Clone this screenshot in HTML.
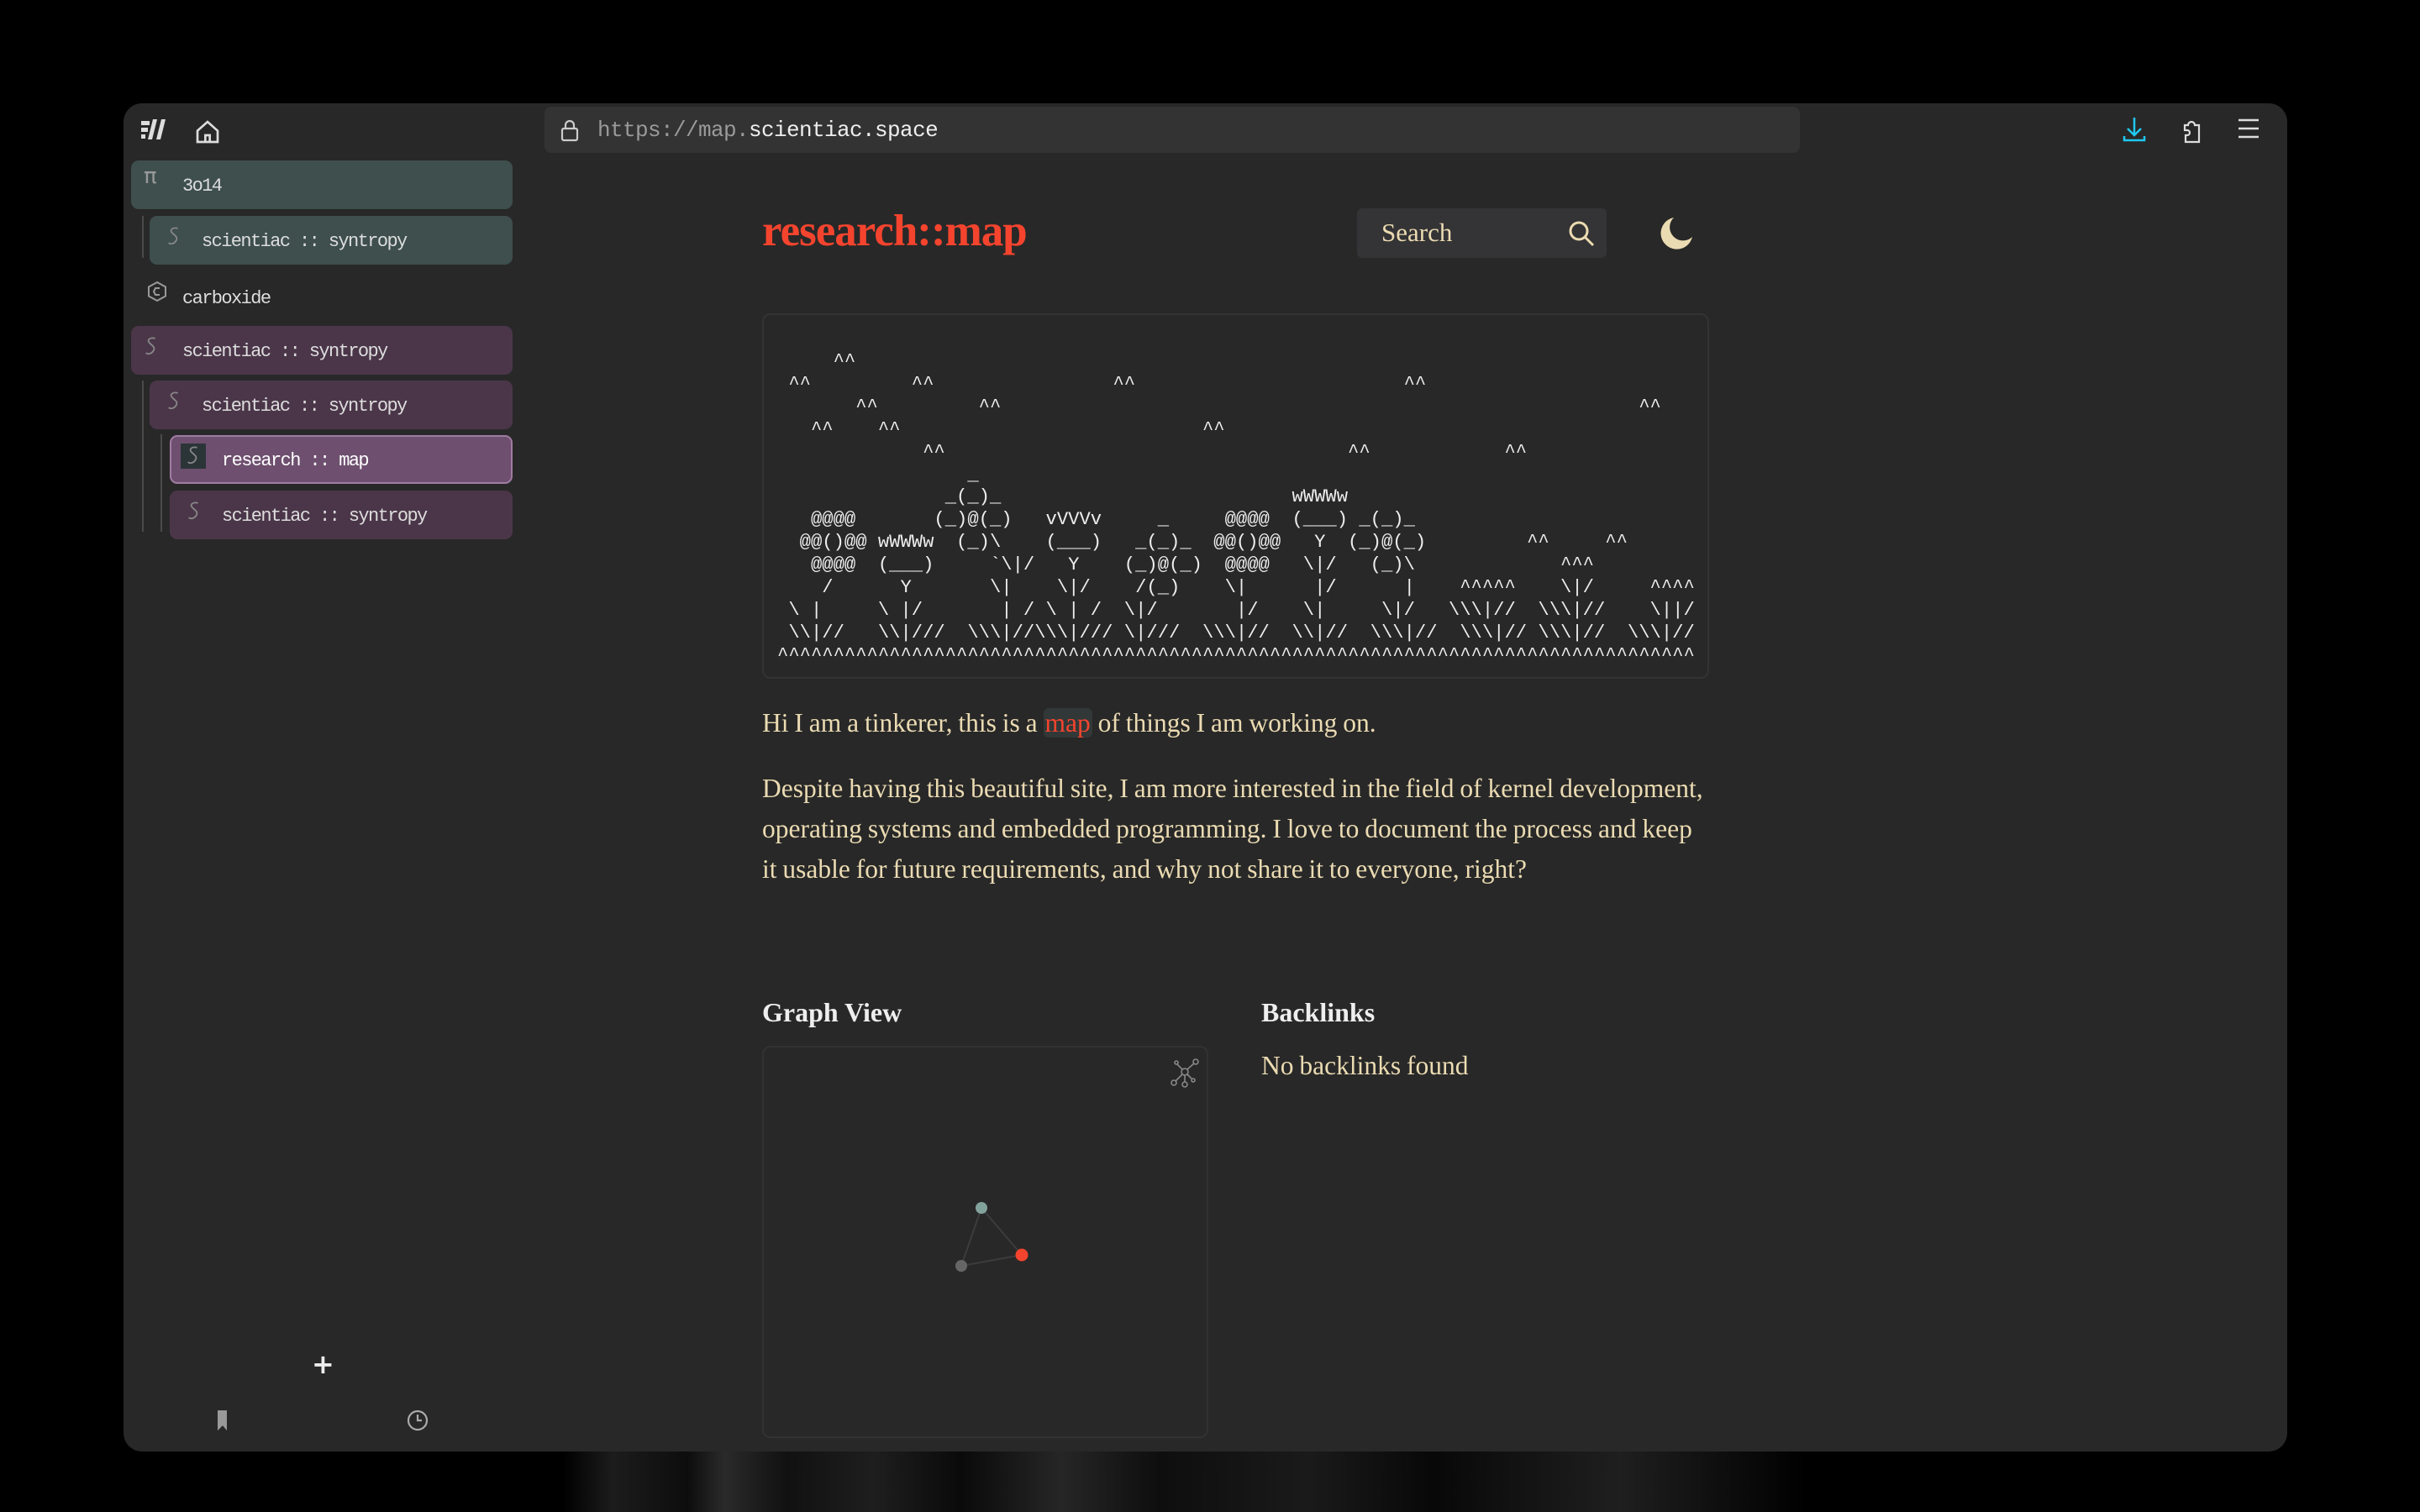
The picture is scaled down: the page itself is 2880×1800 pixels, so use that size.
<!DOCTYPE html>
<html><head><meta charset="utf-8"><style>
*{margin:0;padding:0;box-sizing:border-box}
html,body{width:2880px;height:1800px;background:#000;overflow:hidden;position:relative;font-family:"Liberation Serif",serif}
.bgsw{position:absolute;left:670px;top:1720px;width:1480px;height:80px;background:linear-gradient(90deg,transparent 0,#1c1c1c 4%,#0d0d0d 10%,#2a2a2a 13%,#111 18%,#1e1e1e 25%,#0a0a0a 32%,#262626 40%,#0e0e0e 48%,#1a1a1a 60%,#080808 70%,#1f1f1f 85%,transparent 100%)}
.win{position:absolute;left:147px;top:123px;width:2575px;height:1605px;background:#282828;border-radius:22px;overflow:hidden}
.url{position:absolute;left:501px;top:4px;width:1494px;height:55px;background:#333;border-radius:8px}
.url span{position:absolute;left:63px;top:13px;font:26px "Liberation Mono",monospace;color:#eee;white-space:pre;letter-spacing:-0.6px}
.item{position:absolute;height:58px;border-radius:9px;font:22px "Liberation Mono",monospace;color:#ddd;white-space:pre;letter-spacing:-1.6px}
.item .t{position:absolute;top:18px}
.item svg{position:absolute;top:12px}
.tl{position:absolute;background:#4a4a4a;width:2px}
.c{position:absolute;left:760px}
h1{position:absolute;left:760px;top:122px;font:bold 53px "Liberation Serif",serif;color:#f4442e;letter-spacing:-1px}
.search{position:absolute;left:1468px;top:125px;width:297px;height:59px;background:#343335;border-radius:6px}
.search span{position:absolute;left:29px;top:11px;font:31px "Liberation Serif",serif;color:#ebdbb2}
pre{position:absolute;left:760px;top:250px;width:1127px;height:435px;border:2px solid #333;border-radius:10px;padding:43px 0 0 16px;font:22.2px/26.9px "Liberation Mono",monospace;color:#eee}
p{font-size:31.5px;color:#ebdbb2;line-height:48px;width:1126px;word-spacing:-1px}
.hl{background:#323838;color:#f4442e;border-radius:6px;padding:0 2px}
.h3{position:absolute;font:bold 32px "Liberation Serif",serif;color:#eee}
.graph{position:absolute;left:760px;top:1122px;width:531px;height:467px;border:2px solid #323232;border-radius:10px}
</style></head><body>
<svg width="0" height="0" style="position:absolute"><defs><symbol id="sq" viewBox="0 0 20 26"><path d="M15 3C10 1 4 4 7 8s9 6 6 11-8 5-10 3" fill="none" stroke="#888" stroke-width="2"/></symbol></defs></svg>
<div class="bgsw"></div>
<div class="win">
 <svg style="position:absolute;left:20px;top:18px" width="30" height="28" viewBox="0 0 30 28"><g fill="#ddd"><path d="M1 3h10v5H1zM1 11h8v5H1zM1 19h5v5H1z"/><path d="M15 1h5l-6 24h-5z"/><path d="M25 1h5l-6 24h-5z"/></g></svg>
 <svg style="position:absolute;left:84px;top:18px" width="32" height="32" viewBox="0 0 24 24" fill="none" stroke="#ddd" stroke-width="2"><path d="M3 11 12 3l9 8v10H3z"/><path d="M10 21v-6h4v6"/></svg>
 <div class="url">
  <svg style="position:absolute;left:18px;top:14px" width="24" height="28" viewBox="0 0 24 28" fill="none" stroke="#ccc" stroke-width="2.2"><rect x="3" y="12" width="18" height="14" rx="2"/><path d="M7 12V8a5 5 0 0 1 10 0v4"/></svg>
  <span><span style="position:static;color:#9a9a9a">https://map.</span>scientiac.space</span>
 </div>
 <svg style="position:absolute;left:2378px;top:14px" width="30" height="34" viewBox="0 0 30 34" fill="none" stroke="#1ec8f0" stroke-width="2.5"><path d="M15 3v20M7 16l8 8 8-8"/><path d="M3 25v5h24v-5"/></svg>
 <svg style="position:absolute;left:2448px;top:14px" width="28" height="34" viewBox="0 0 28 34" fill="none" stroke="#ddd" stroke-width="2.2"><path d="M5 12h4a4 4 0 1 1 8 0h5v20H6v-8h2a3 3 0 1 0 0-6H5z"/></svg>
 <svg style="position:absolute;left:2516px;top:16px" width="26" height="28" viewBox="0 0 26 28" stroke="#ddd" stroke-width="2.4"><path d="M1 4h24M1 14h24M1 24h24"/></svg>

 <div class="item" style="left:9px;top:68px;width:454px;background:#3e4f4d"><span style="position:absolute;left:15px;top:4px;color:#999;font:26px 'DejaVu Sans'">π</span><span class="t" style="left:61px">3o14</span></div>
 <div class="tl" style="left:22px;top:134px;height:50px"></div>
 <div class="item" style="left:31px;top:134px;width:432px;background:#3e4f4d"><svg style="left:20px" width="18" height="24"><use href="#sq"/></svg><span class="t" style="left:62px">scientiac :: syntropy</span></div>
 <svg style="position:absolute;left:28px;top:211px" width="24" height="26" viewBox="0 0 24 26" fill="none" stroke="#999" stroke-width="2"><path d="M12 2 22 7.5v11L12 24 2 18.5v-11z"/><path d="M15 9h-5l-2 4 2 4h5"/></svg>
 <div class="item" style="left:70px;top:202px;background:none"><span class="t" style="left:0">carboxide</span></div>
 <div class="item" style="left:9px;top:265px;width:454px;background:#4b3649"><svg style="left:15px" width="18" height="24"><use href="#sq"/></svg><span class="t" style="left:61px">scientiac :: syntropy</span></div>
 <div class="tl" style="left:22px;top:330px;height:180px"></div>
 <div class="item" style="left:31px;top:330px;width:432px;background:#4b3649"><svg style="left:20px" width="18" height="24"><use href="#sq"/></svg><span class="t" style="left:62px">scientiac :: syntropy</span></div>
 <div class="tl" style="left:44px;top:394px;height:116px"></div>
 <div class="item" style="left:55px;top:395px;width:408px;background:#6e4f6f;border:2px solid #a07ca2"><span style="position:absolute;left:11px;top:8px;width:30px;height:30px;background:#2b3538"></span><svg style="left:17px;top:10px" width="18" height="24"><use href="#sq"/></svg><span class="t" style="left:60px;top:16px;color:#fff">research :: map</span></div>
 <div class="item" style="left:55px;top:461px;width:408px;background:#4b3649"><svg style="left:20px" width="18" height="24"><use href="#sq"/></svg><span class="t" style="left:62px">scientiac :: syntropy</span></div>
 <div style="position:absolute;left:224px;top:1482px;font:bold 32px 'DejaVu Sans';color:#eee">+</div>
 <svg style="position:absolute;left:110px;top:1555px" width="16" height="26" viewBox="0 0 16 26"><path d="M2 1h11v24l-5-6-6 6z" fill="#999"/></svg>
 <svg style="position:absolute;left:336px;top:1554px" width="28" height="28" viewBox="0 0 28 28" fill="none" stroke="#aaa" stroke-width="2.2"><circle cx="14" cy="14" r="11"/><path d="M14 7v7h5"/></svg>

 <h1>research::map</h1>
 <div class="search"><span>Search</span>
  <svg style="position:absolute;left:250px;top:13px" width="34" height="34" viewBox="0 0 34 34" fill="none" stroke="#ebdbb2" stroke-width="3"><circle cx="14" cy="14" r="10"/><path d="M21 21l10 10"/></svg></div>
 <svg style="position:absolute;left:1827px;top:133px" width="42" height="42" viewBox="0 0 42 42"><path d="M18 3A19 19 0 1 0 40 26 15 15 0 0 1 18 3z" fill="#ebdbb2"/></svg>

<pre>     ^^
 ^^         ^^                ^^                        ^^
       ^^         ^^                                                         ^^
   ^^    ^^                           ^^
             ^^                                    ^^            ^^
                 _
               _(_)_                          wWWWw
   @@@@       (_)@(_)   vVVVv     _     @@@@  (___) _(_)_
  @@()@@ wWWWw  (_)\    (___)   _(_)_  @@()@@   Y  (_)@(_)         ^^     ^^
   @@@@  (___)     `\|/   Y    (_)@(_)  @@@@   \|/   (_)\             ^^^
    /      Y       \|    \|/    /(_)    \|      |/      |    ^^^^^    \|/     ^^^^
 \ |     \ |/       | / \ | /  \|/       |/    \|     \|/   \\\|//  \\\|//    \||/
 \\|//   \\|///  \\\|//\\\|/// \|///  \\\|//  \\|//  \\\|//  \\\|// \\\|//  \\\|//
^^^^^^^^^^^^^^^^^^^^^^^^^^^^^^^^^^^^^^^^^^^^^^^^^^^^^^^^^^^^^^^^^^^^^^^^^^^^^^^^^^</pre>

 <p class="c" style="top:714px">Hi I am a tinkerer, this is a <span class="hl">map</span> of things I am working on.</p>
 <p class="c" style="top:792px">Despite having this beautiful site, I am more interested in the field of kernel development, operating systems and embedded programming. I love to document the process and keep it usable for future requirements, and why not share it to everyone, right?</p>

 <div class="h3" style="left:760px;top:1064px">Graph View</div>
 <div class="h3" style="left:1354px;top:1064px">Backlinks</div>
 <p class="c" style="left:1354px;top:1122px;width:600px">No backlinks found</p>
 <div class="graph">
  <svg style="position:absolute;left:483px;top:12px" width="36" height="38" viewBox="0 0 36 38" fill="none" stroke="#888" stroke-width="1.6"><circle cx="18" cy="17" r="4"/><circle cx="31" cy="5" r="3"/><circle cx="5" cy="30" r="3"/><circle cx="18" cy="32" r="3"/><circle cx="8" cy="6" r="2"/><circle cx="28" cy="27" r="2"/><path d="M21 14l8-7M15 20l-8 8M18 21v8M15 14 9 8M21 20l5 5"/></svg>
  <svg style="position:absolute;left:0;top:0" width="531" height="467"><path d="M259 191 235 260 307 247z" fill="none" stroke="#3c3c3c" stroke-width="2"/><circle cx="259" cy="191" r="7" fill="#82a39c"/><circle cx="307" cy="247" r="7.5" fill="#f4442e"/><circle cx="235" cy="260" r="7" fill="#666"/></svg>
 </div>
</div>
</body></html>
